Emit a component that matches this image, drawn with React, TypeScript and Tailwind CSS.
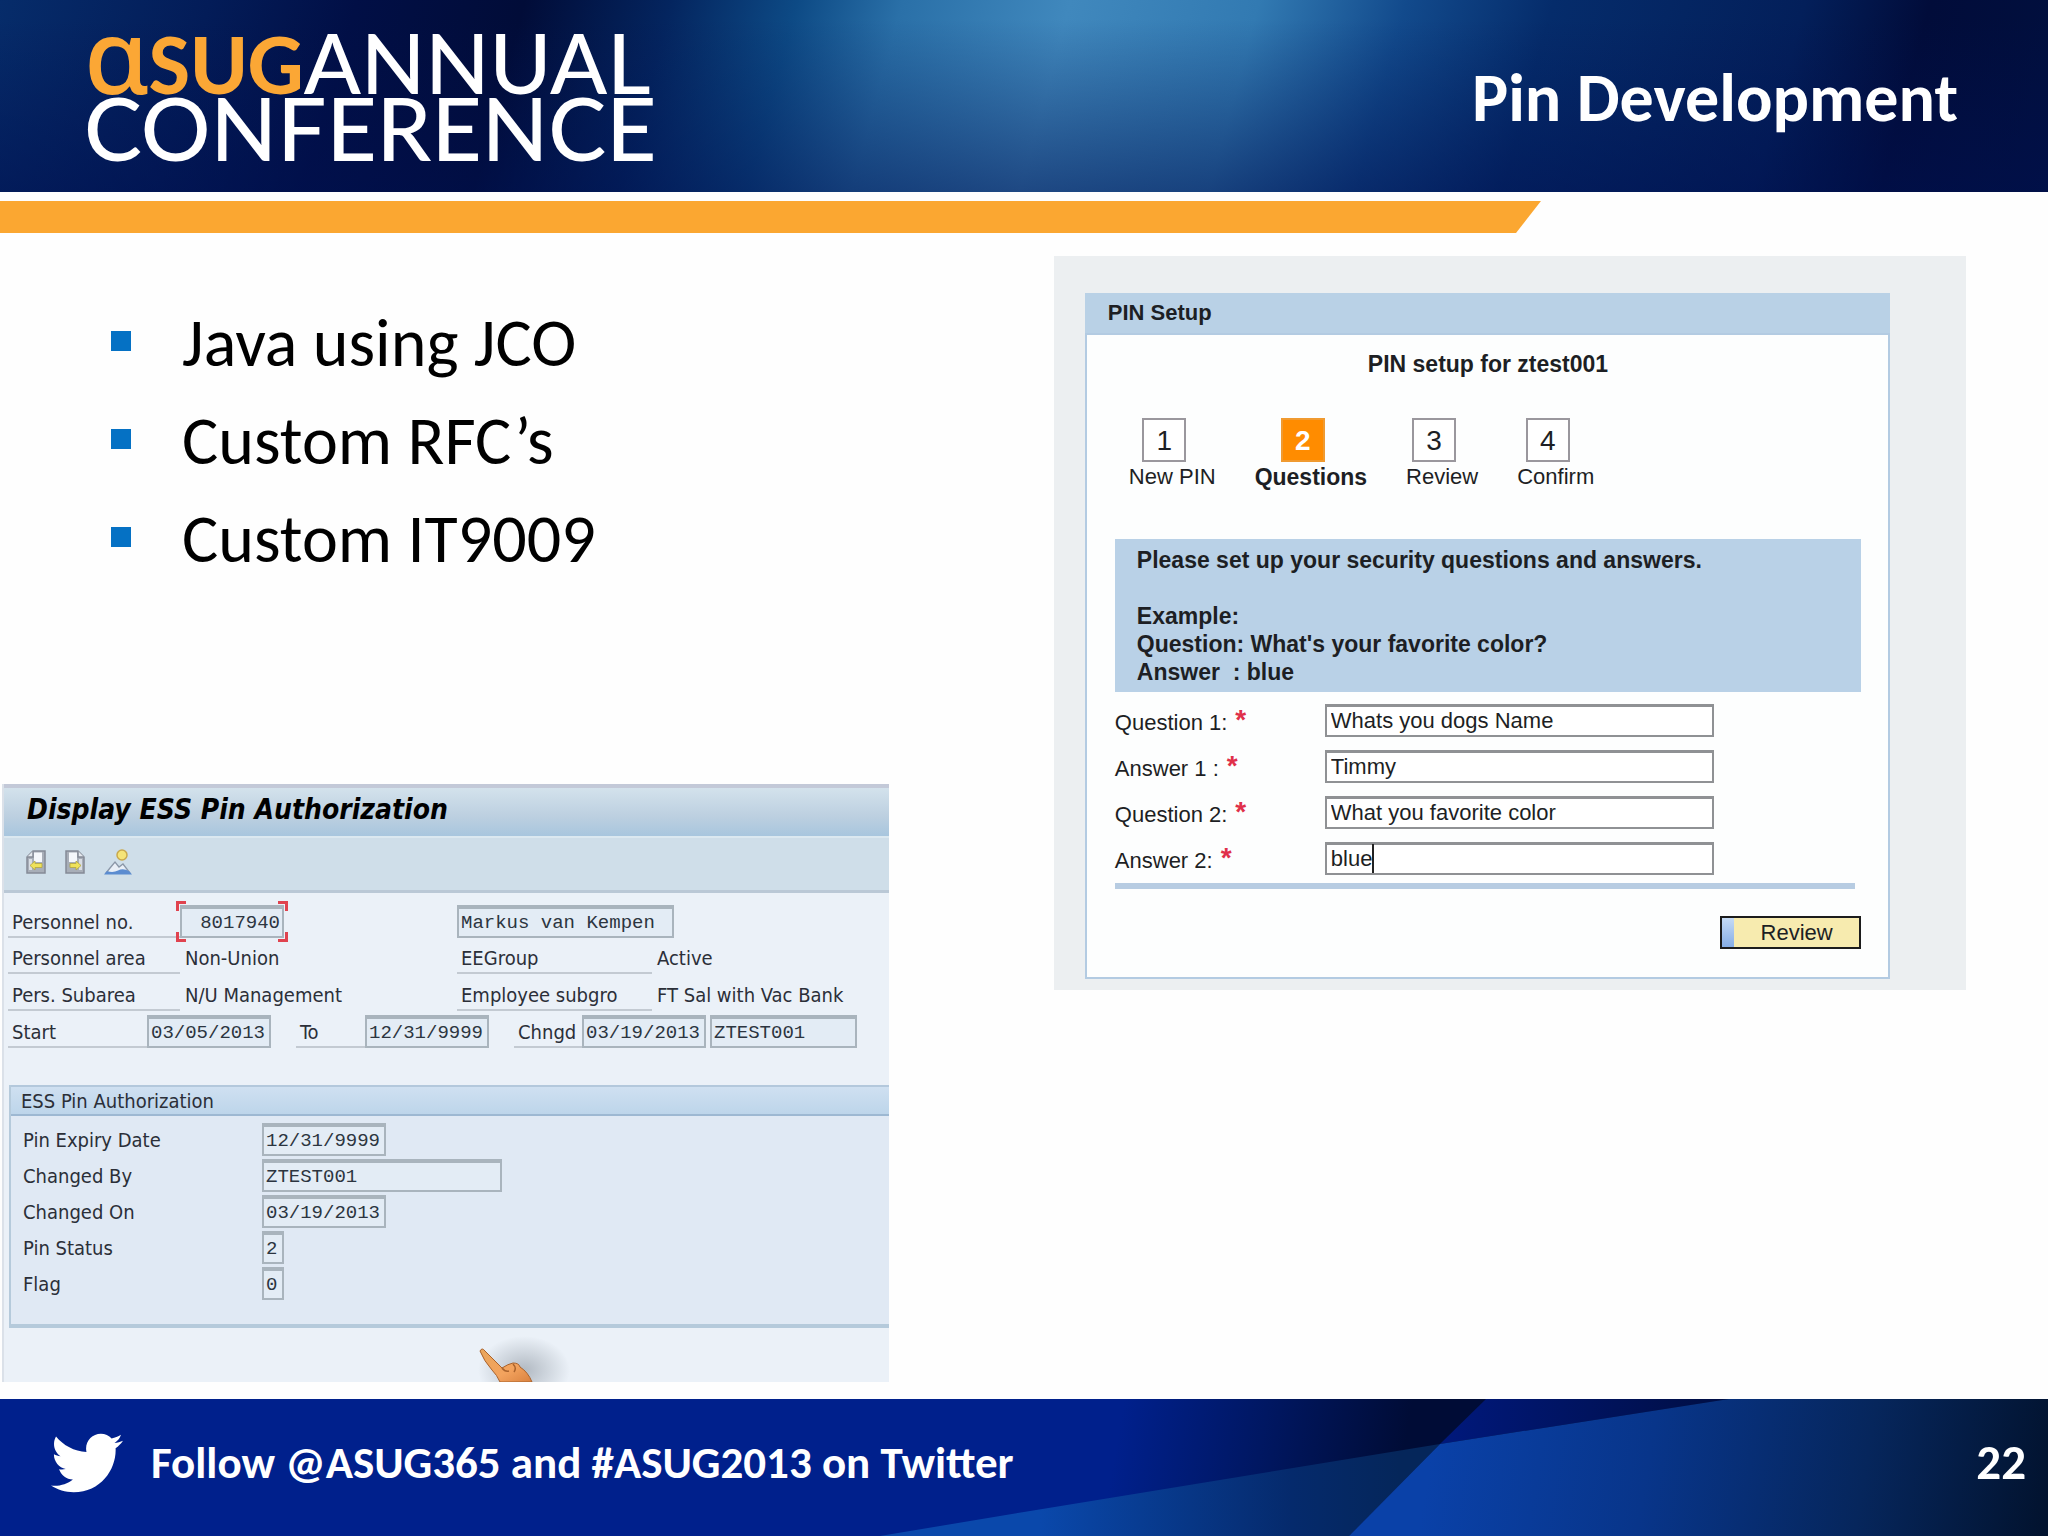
import type { ReactNode } from "react";
import { FaTwitter } from "react-icons/fa";

const slideFont = "font-['Carlito','Lato',sans-serif]";

function Header() {
  return (
    <header className="flex h-48 items-center justify-between bg-[linear-gradient(to_bottom,transparent_10%,#00105088_100%),linear-gradient(105deg,#062c6a_0%,#031c58_10%,#010f46_17%,#010c38_25%,#04255f_32%,#0d4a85_38%,#2a70a8_43%,#4088bd_51%,#327ab2_60%,#124a8c_67%,#052c6b_74%,#031f5a_86%,#010c3a_92%,#01103f_100%)] pl-[84px] pr-[90px]">
      <div
        aria-label="ASUG Annual Conference"
        className="pb-3 font-['Lato',sans-serif] text-[87px] font-medium leading-[63px] text-white"
      >
        <div className="flex items-baseline whitespace-nowrap">
          <span className="font-['Noto_Sans',sans-serif] text-[104px] font-medium leading-[63px] text-[#fba735]">ɑ</span>
          <span className="font-['Carlito','Lato',sans-serif] text-[88px] font-bold leading-[63px] text-[#fba735]">SUG</span>
          <span className="text-[84px] leading-[63px]">ANNUAL</span>
        </div>
        <div>CONFERENCE</div>
      </div>
      <h1 className={`pt-1 text-[68px] font-bold leading-none text-white ${slideFont}`}>Pin Development</h1>
    </header>
  );
}

const bullets = ["Java using JCO", "Custom RFC’s", "Custom IT9009"];

function Bullets() {
  return (
    <ul className={`flex flex-col gap-[10px] pl-[111px] pt-[66px] text-[68px] leading-[88px] text-black ${slideFont}`}>
      {bullets.map((b) => (
        <li key={b} className="flex items-center gap-[51px]">
          <span className="mb-1 size-5 bg-[#0571c4]" />
          {b}
        </li>
      ))}
    </ul>
  );
}

function Field({ label, value, width, align = "text-left" }: { label: string; value: string; width: string; align?: string }) {
  return (
    <input
      aria-label={label}
      readOnly
      defaultValue={value}
      className={`h-[33px] border-2 border-t-4 border-[#a9b4bd] bg-[#e3ecf5] px-[2px] font-['Liberation_Mono',monospace] text-[19px] text-[#2c3540] outline-none ${width} ${align}`}
    />
  );
}

function Label({ children, width = "" }: { children: ReactNode; width?: string }) {
  return <span className={`h-[33px] whitespace-nowrap border-b-2 border-[#c3cad2] pl-1 leading-[34px] ${width}`}>{children}</span>;
}

function PageIcon({ flip = false }: { flip?: boolean }) {
  return (
    <svg viewBox="0 0 20 24" className="h-6 w-5">
      <g transform={flip ? "translate(20 0) scale(-1 1)" : undefined}>
        <path d="M7 1H19V23H1V7Z" fill="#a8aeb8" stroke="#858b96" strokeWidth="1.5" />
        <path d="M8 2.500H16V12H8Z" fill="#f5f7fb" />
        <path d="M1 7H7V1" fill="#e4e8ee" stroke="#858b96" strokeWidth="1.500" />
        <path d="M3 9H6V20H3Z" fill="#d9dde4" />
      </g>
      <path
        d={flip ? "M16 15.500L11 11V13.500H5V17.500H11V20Z" : "M4 15.500L9 11V13.500H16V17.500H9V20Z"}
        fill="#efe25a"
        stroke="#b3a640"
        strokeWidth="0.8"
      />
    </svg>
  );
}

function OverviewIcon() {
  return (
    <svg viewBox="0 0 28 26" className="h-[26px] w-7">
      <circle cx="18" cy="6" r="5" fill="#f5e478" stroke="#c9a84c" strokeWidth="1.500" />
      <path d="M2 24L6 19L11 13L15 18L19 15L26 24Z" fill="#e9eff7" stroke="#8b97a8" strokeWidth="1.300" />
      <path d="M0 25.500L3 22Q9 24 14 21.500T25 22L28 25.500Z" fill="#5b8cd0" />
    </svg>
  );
}

function Corners() {
  const corner = "absolute size-[10px] border-[#e0434f]";
  return (
    <>
      <span className={`${corner} -left-1 -top-1 border-l-[3px] border-t-[3px]`} />
      <span className={`${corner} -right-1 -top-1 border-r-[3px] border-t-[3px]`} />
      <span className={`${corner} -bottom-1 -left-1 border-b-[3px] border-l-[3px]`} />
      <span className={`${corner} -bottom-1 -right-1 border-b-[3px] border-r-[3px]`} />
    </>
  );
}

function Hand() {
  return (
    <svg viewBox="0 0 110 60" className="absolute bottom-0 left-[460px] h-[60px] w-[110px]">
      <defs>
        <radialGradient id="handShade">
          <stop offset="0" stopColor="#5b6672" stopOpacity="0.4" />
          <stop offset="1" stopColor="#5b6672" stopOpacity="0" />
        </radialGradient>
        <linearGradient id="skin" x1="0" y1="0" x2="1" y2="1">
          <stop offset="0" stopColor="#e9a65c" />
          <stop offset="0.6" stopColor="#f3a35e" />
          <stop offset="1" stopColor="#d9813f" />
        </linearGradient>
      </defs>
      <ellipse cx="60" cy="48" rx="46" ry="34" fill="url(#handShade)" />
      <path
        d="M16 29Q18 25 21 29L38 46Q44 42 49 41Q55 41 56 45Q64 50 68 60H36Q33 53 28 48Q20 39 16 29Z"
        fill="url(#skin)"
        stroke="#a9622c"
        strokeWidth="1"
      />
      <path d="M38 46Q41 50 45 49M49 42Q53 46 50 50" fill="none" stroke="#a9622c" strokeWidth="1.500" />
    </svg>
  );
}

const pinRows = [
  { label: "Pin Expiry Date", value: "12/31/9999", width: "w-[124px]" },
  { label: "Changed By", value: "ZTEST001", width: "w-[240px]" },
  { label: "Changed On", value: "03/19/2013", width: "w-[124px]" },
  { label: "Pin Status", value: "2", width: "w-[22px]" },
  { label: "Flag", value: "0", width: "w-[22px]" },
];

function AuthorizationPanel() {
  return (
    <section className="relative ml-[2px] overflow-hidden border-l-2 border-[#dbe1e9] bg-[#ebf1f8] font-['DejaVu_Sans_Condensed','DejaVu_Sans',sans-serif] text-[20px] text-[#2b2f38]">
      <div className="h-[52px] border-t-4 border-[#c3c9d8] bg-[linear-gradient(to_bottom,#d3e2ec,#bccfe0_60%,#a8c6de)]">
        <h2 className="pl-[23px] text-[28px] font-bold italic leading-[44px] text-black">Display ESS Pin Authorization</h2>
      </div>
      <div className="flex h-[57px] items-center gap-[19px] border-b-[3px] border-t-2 border-b-[#bac8d6] border-t-[#dbe8f0] bg-[#cfdee9] pb-1 pl-[22px]">
        <button aria-label="Previous record"><PageIcon /></button>
        <button aria-label="Next record"><PageIcon flip /></button>
        <button aria-label="Overview"><OverviewIcon /></button>
      </div>

      <div className="flex flex-col gap-[3px] pl-1 pt-3">
        <div className="grid grid-cols-[172px_277px_200px_1fr] gap-y-[3px]">
          <Label>Personnel no.</Label>
          <div>
            <span className="relative inline-flex">
              <Field label="Personnel no." value="8017940" width="w-[104px]" align="text-right" />
              <Corners />
            </span>
          </div>
          <div className="col-span-2 flex">
            <Field label="Name" value="Markus van Kempen" width="w-[217px]" />
          </div>
          <Label>Personnel area</Label>
          <span className="pl-[5px] leading-[34px]">Non-Union</span>
          <Label width="w-[195px]">EEGroup</Label>
          <span className="leading-[34px]">Active</span>
          <Label>Pers. Subarea</Label>
          <span className="pl-[5px] leading-[34px]">N/U Management</span>
          <Label width="w-[195px]">Employee subgro</Label>
          <span className="whitespace-nowrap leading-[34px]">FT Sal with Vac Bank</span>
        </div>
        <div className="flex">
          <Label width="w-[139px]">Start</Label>
          <Field label="Start" value="03/05/2013" width="w-[124px]" />
          <span className="ml-[25px] flex">
            <Label width="w-[69px]">To</Label>
            <Field label="To" value="12/31/9999" width="w-[124px]" />
          </span>
          <span className="ml-[25px] flex">
            <Label width="w-[68px]">Chngd</Label>
            <Field label="Changed on" value="03/19/2013" width="w-[124px]" />
          </span>
          <span className="ml-1 flex">
            <Field label="Changed by" value="ZTEST001" width="w-[147px]" />
          </span>
        </div>
      </div>

      <div className="mb-[54px] ml-[5px] mt-[37px] border-b-4 border-l-2 border-[#b5cadb] bg-[#e0e9f4]">
        <h3 className="h-[31px] border-b-2 border-t-2 border-b-[#9db8d2] border-t-[#b3c8dc] bg-[linear-gradient(to_bottom,#cfe0f1,#bdd5ea)] pl-[10px] leading-[28px]">
          ESS Pin Authorization
        </h3>
        <div className="flex flex-col gap-[3px] pb-[24px] pl-3 pt-[7px]">
          {pinRows.map((r) => (
            <div key={r.label} className="flex h-[33px] leading-[34px]">
              <span className="w-[239px]">{r.label}</span>
              <Field label={r.label} value={r.value} width={r.width} />
            </div>
          ))}
        </div>
      </div>
      <Hand />
    </section>
  );
}

const steps = ["New PIN", "Questions", "Review", "Confirm"];

const questions = [
  { label: "Question 1:", value: "Whats you dogs Name" },
  { label: "Answer 1 :", value: "Timmy" },
  { label: "Question 2:", value: "What you favorite color" },
  { label: "Answer 2:", value: "blue", caret: true },
];

function PinSetup() {
  return (
    <section className="bg-[#eceff1] pb-[11px] pl-[31px] pr-[76px] pt-[37px] font-['Liberation_Sans',sans-serif] text-[22px] text-[#1d1f24]">
      <h2 className="h-10 bg-[#b9d1e6] pl-[23px] font-bold leading-[40px]">PIN Setup</h2>
      <div className="border-2 border-[#b3cbe2] bg-[#fdfefe] pb-[28px] pl-7 pr-[27px] pt-[15px]">
        <p className="text-center text-[23px] font-bold leading-[28px]">PIN setup for ztest001</p>
        <ol className="flex gap-[39px] pl-[14px] pt-[40px]">
          {steps.map((s, i) => (
            <li key={s} className={i === 1 ? "flex flex-col items-center text-[23px] font-bold" : "flex flex-col items-center"}>
              <span className="pr-4">
                <span
                  className={
                    i === 1
                      ? "grid size-11 place-items-center border-2 border-[#f09a30] bg-[#ff8c00] text-[28px] text-white"
                      : "grid size-11 place-items-center border-2 border-[#9a979d] bg-white text-[28px]"
                  }
                >
                  {i + 1}
                </span>
              </span>
              <span className="leading-[30px]">{s}</span>
            </li>
          ))}
        </ol>
        <div className="mt-[47px] h-[153px] whitespace-pre bg-[#b9d1e7] pl-[22px] pt-[7px] text-[23px] font-bold leading-[28px]">
          {"Please set up your security questions and answers.\n\nExample:\nQuestion: What's your favorite color?\nAnswer  : blue"}
        </div>
        <form className="pt-3" onSubmit={(e) => e.preventDefault()}>
          <div className="flex flex-col gap-[13px]">
            {questions.map((q) => (
              <label key={q.label} className="flex h-[33px] items-center">
                <span className="flex w-[210px] gap-2 pt-1">
                  {q.label}
                  <span className="text-[28px] font-bold leading-[28px] text-[#e0304a]">*</span>
                </span>
                <span className="relative flex">
                  <input
                    defaultValue={q.value}
                    className="h-[33px] w-[389px] border-2 border-t-[3px] border-[#8f9194] bg-white px-1 pb-[2px] outline-none"
                  />
                  {q.caret && <span className="absolute left-[47px] top-[2px] h-[29px] w-[2px] bg-[#222]" />}
                </span>
              </label>
            ))}
          </div>
          <hr className="mr-[6px] mt-2 h-[6px] border-0 bg-[#b7cce2]" />
          <div className="flex justify-end pt-[27px]">
            <button
              type="submit"
              className="flex h-[33px] w-[141px] items-center border-2 border-[#1c1c1c] bg-[#f7ebaf]"
            >
              <span className="h-full w-3 bg-[linear-gradient(to_bottom,#c5daf5,#86aee6)]" />
              <span className="flex-1 text-center">Review</span>
            </button>
          </div>
        </form>
      </div>
    </section>
  );
}

function FooterArt() {
  return (
    <svg viewBox="0 0 2048 137" preserveAspectRatio="none" className="absolute inset-0 size-full" aria-hidden="true">
      <defs>
        <linearGradient id="fa" gradientUnits="userSpaceOnUse" x1="1110" y1="80" x2="1390" y2="130">
          <stop offset="0" stopColor="#00208c" />
          <stop offset="0.500" stopColor="#001762" />
          <stop offset="1" stopColor="#000c36" />
        </linearGradient>
        <linearGradient id="fb" gradientUnits="userSpaceOnUse" x1="1040" y1="0" x2="1400" y2="0">
          <stop offset="0" stopColor="#0a48ab" />
          <stop offset="0.700" stopColor="#052a6c" />
          <stop offset="1" stopColor="#05265a" />
        </linearGradient>
        <linearGradient id="fc" gradientUnits="userSpaceOnUse" x1="1450" y1="0" x2="1700" y2="0">
          <stop offset="0" stopColor="#00187a" />
          <stop offset="1" stopColor="#000f48" />
        </linearGradient>
        <linearGradient id="fd" gradientUnits="userSpaceOnUse" x1="1440" y1="0" x2="2048" y2="100">
          <stop offset="0" stopColor="#0a41a8" />
          <stop offset="0.350" stopColor="#08358a" />
          <stop offset="0.700" stopColor="#06265c" />
          <stop offset="1" stopColor="#02132f" />
        </linearGradient>
      </defs>
      <rect width="2048" height="137" fill="url(#fa)" />
      <path d="M1486 0H1729L1440 45Z" fill="url(#fc)" />
      <path d="M880 137L1024 113L1440 45L1349 137Z" fill="url(#fb)" />
      <path d="M1349 137L1440 45L1729 0H2048V137Z" fill="url(#fd)" />
    </svg>
  );
}

function Footer() {
  return (
    <footer className={`relative h-[137px] bg-[#00208c] font-bold text-white ${slideFont}`}>
      <FooterArt />
      <div className="relative flex h-full items-center pb-[10px] pl-[51px] pr-[22px]">
        <FaTwitter className="size-[72px]" />
        <span className="ml-7 flex-1 text-[45px]">Follow @ASUG365 and #ASUG2013 on Twitter</span>
        <span className="text-[49px]">22</span>
      </div>
    </footer>
  );
}

export default function App() {
  return (
    <div className="flex min-h-screen flex-col bg-[#fefefe]">
      <Header />
      <div className="mt-[9px] h-8 w-[1541px] max-w-full bg-[#fba731] [clip-path:polygon(0_0,100%_0,calc(100%-25px)_100%,0_100%)]" />
      <main className="flex flex-1 justify-between gap-8 pb-[17px] pr-[4%]">
        <div className="flex w-[45.2%] flex-col justify-between">
          <Bullets />
          <AuthorizationPanel />
        </div>
        <div className="w-[46.4%] pt-[23px]">
          <PinSetup />
        </div>
      </main>
      <Footer />
    </div>
  );
}
